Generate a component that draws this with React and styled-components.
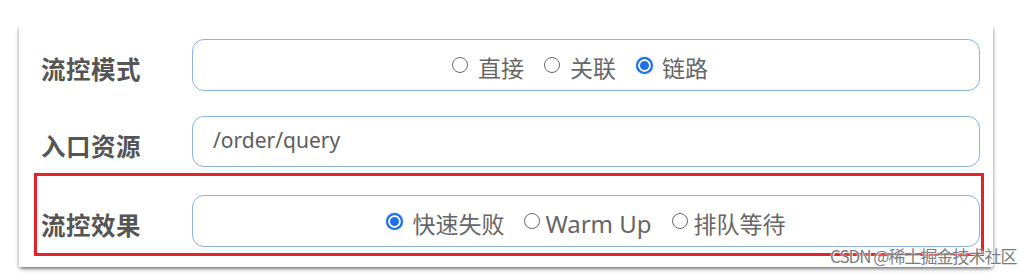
import React from "react";
import styled, { createGlobalStyle } from "styled-components";

const Global = createGlobalStyle`
  html, body { margin: 0; padding: 0; background: #ffffff; }
  body { font-family: "Noto Sans", "Noto Sans CJK SC", sans-serif; }
`;

const Page = styled.div`
  width: 1020px;
  height: 277px;
  padding: 25px 0 0 19px;
  box-sizing: border-box;
  background: #fff;
  overflow: hidden;
`;

const Card = styled.div`
  position: relative;
  width: 974px;
  height: 242px;
  box-sizing: border-box;
  padding: 14px 0 0 0;
  background: #fff;
  box-shadow: 0 3px 4px -1px rgba(0, 0, 0, 0.35), -2px 2px 3px -1px rgba(0, 0, 0, 0.18),
    2px 2px 3px -1px rgba(0, 0, 0, 0.22);
  display: flex;
  flex-direction: column;
`;

const Row = styled.div`
  display: flex;
  align-items: center;
  margin: ${(p) => p.$margin || "0 13px 0 22px"};
`;

const Label = styled.div`
  width: 151px;
  flex: none;
  padding-top: 7px;
  font-family: "Noto Sans CJK SC", sans-serif;
  font-weight: 700;
  font-size: 24.5px;
  letter-spacing: 0.5px;
  color: #555;
`;

const Field = styled.div`
  flex: 1;
  height: ${(p) => p.$h || 52}px;
  box-sizing: border-box;
  border: 1.5px solid #8db3df;
  border-radius: 12px;
  display: flex;
  align-items: center;
  justify-content: ${(p) => (p.$center ? "center" : "flex-start")};
  padding: ${(p) => (p.$center ? "4px 0 0 0" : "0 0 0 20px")};
  color: #606060;
`;

const InputText = styled.span`
  font-family: "Noto Sans", sans-serif;
  font-size: 21px;
  color: #5e5e5e;
  padding-bottom: 3px;
`;

const Highlight = styled.div`
  margin: 6px 9px 0 15px;
  border: 3px solid #e5222a;
  padding: 19px 1px 6px 4px;
`;

const Options = styled.div`
  display: flex;
  align-items: center;
  gap: 20px;
  margin-left: ${(p) => p.$shift || 0}px;
`;

const Option = styled.label`
  display: flex;
  align-items: center;
  gap: ${(p) => p.$gap}px;
  font-family: "Noto Sans CJK SC", sans-serif;
  font-size: 23px;
  color: #666;
`;

const Dot = styled.span`
  display: block;
  box-sizing: border-box;
  width: ${(p) => (p.$on ? 17 : 16)}px;
  height: ${(p) => (p.$on ? 17 : 16)}px;
  min-width: ${(p) => (p.$on ? 17 : 16)}px;
  border-radius: 50%;
  flex: none;
  border: ${(p) => (p.$on ? "2px solid #1f6fe8" : "1.8px solid #6a6a6a")};
  background: ${(p) => (p.$on ? "#1f6fe8" : "#fff")};
  box-shadow: ${(p) => (p.$on ? "inset 0 0 0 2px #fff, 0 0 2px rgba(31,111,232,0.5)" : "none")};
  margin-bottom: 4px;
`;

const Latin = styled.span`
  font-family: "Noto Sans", sans-serif;
  font-size: 24px;
`;

const Watermark = styled.div`
  position: absolute;
  left: 811px;
  top: 218px;
  font-family: "Noto Sans CJK SC", sans-serif;
  font-size: 17px;
  color: #7d7d7d;
  white-space: nowrap;
  letter-spacing: -1px;
  text-shadow: 0 0 2px #fff, 1px 1px 0 rgba(255, 255, 255, 0.8);
`;

function Radio({ on, gap, children }) {
  return (
    <Option $gap={gap}>
      <Dot $on={on} />
      {children}
    </Option>
  );
}

export default function App() {
  return (
    <>
      <Global />
      <Page>
        <Card>
          <Row>
            <Label>流控模式</Label>
            <Field $center>
              <Options $shift={-12}>
                <Radio gap={10}>直接</Radio>
                <Radio gap={10}>关联</Radio>
                <Radio on gap={9}>链路</Radio>
              </Options>
            </Field>
          </Row>
          <Row $margin="25px 13px 0 22px">
            <Label>入口资源</Label>
            <Field $h={51}>
              <InputText>/order/query</InputText>
            </Field>
          </Row>
          <Highlight>
            <Row $margin="0">
              <Label>流控效果</Label>
              <Field $center>
                <Options>
                  <Radio on gap={9}>快速失败</Radio>
                  <Radio gap={5}>
                    <Latin>Warm Up</Latin>
                  </Radio>
                  <Radio gap={6}>排队等待</Radio>
                </Options>
              </Field>
            </Row>
          </Highlight>
          <Watermark>CSDN @稀土掘金技术社区</Watermark>
        </Card>
      </Page>
    </>
  );
}
